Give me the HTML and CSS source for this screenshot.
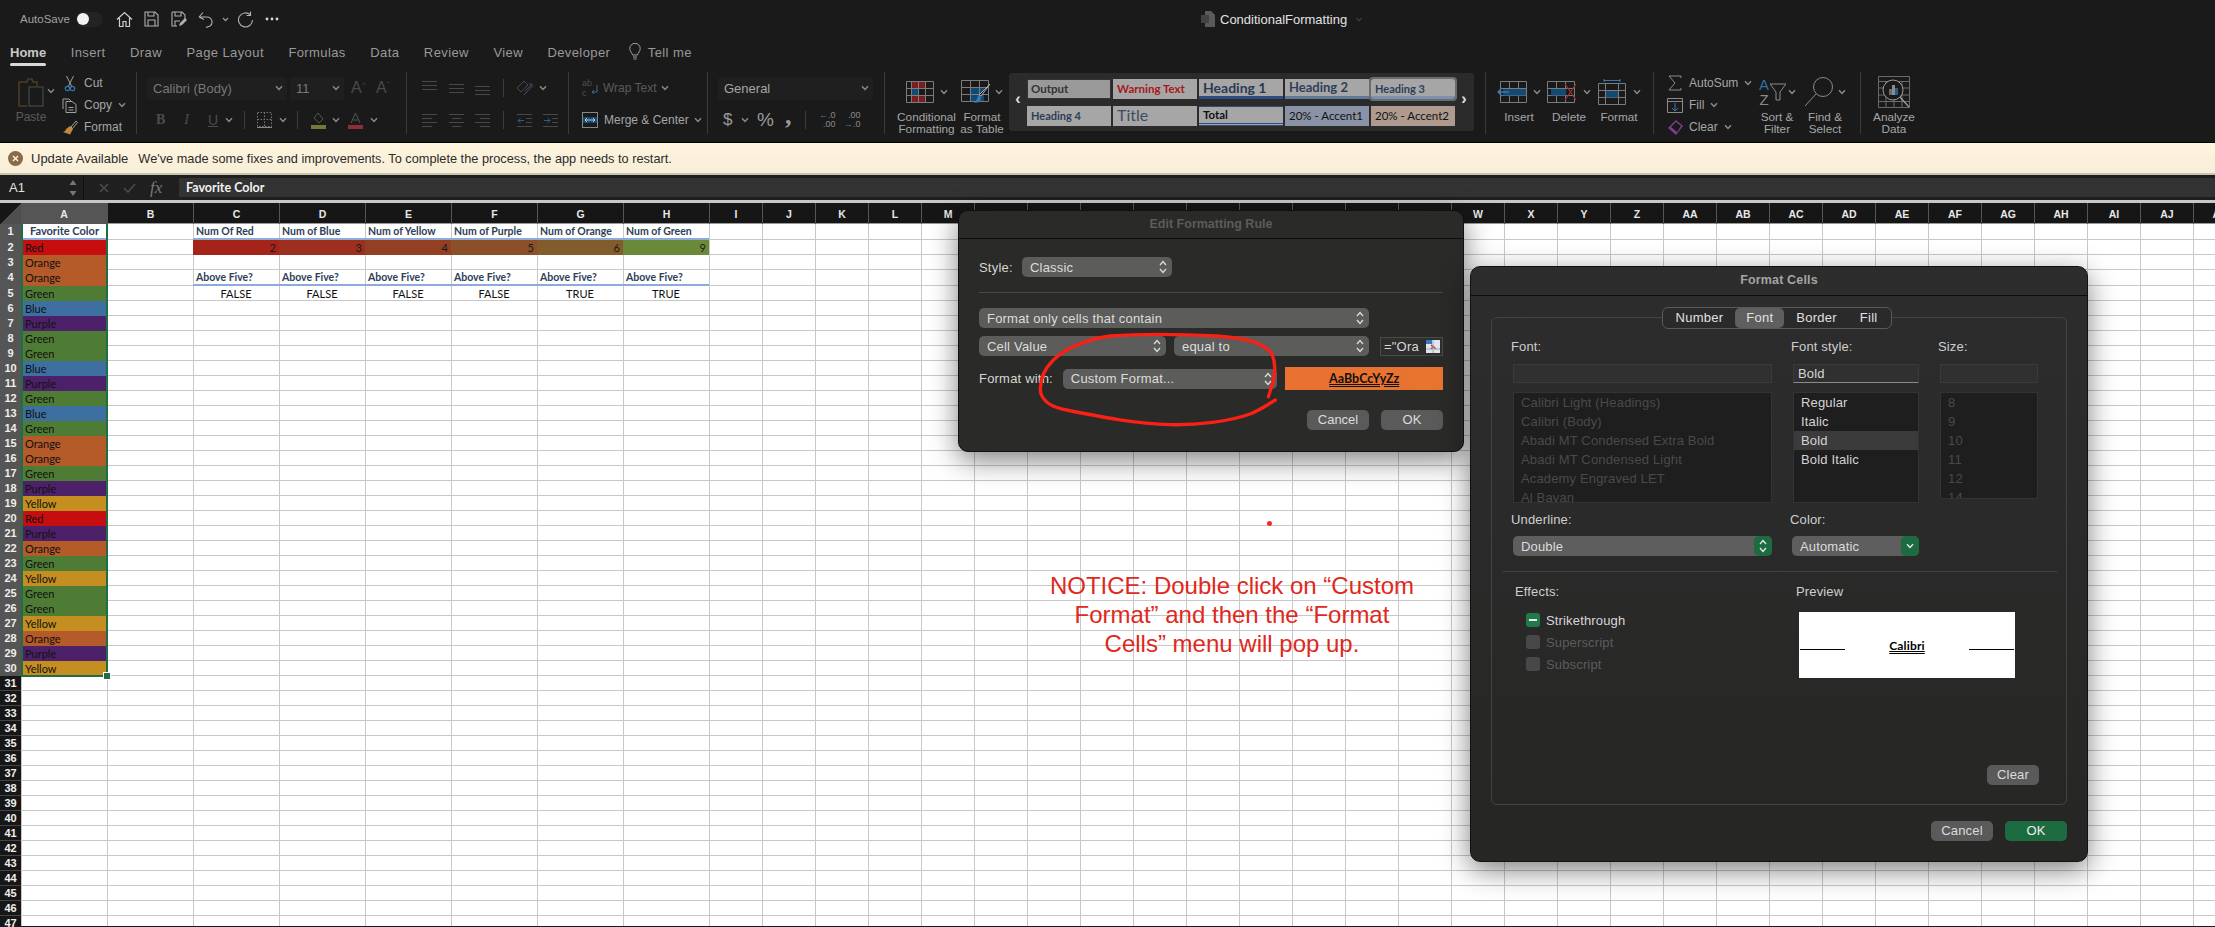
FILE: index.html
```html
<!DOCTYPE html>
<html lang="en">
<head>
  <meta charset="UTF-8">
  <title>ConditionalFormatting</title>
  <link rel="stylesheet" href="styles.css">
</head>
<body>
  <svg class="defs" width="0" height="0">
    <symbol id="chev" viewBox="0 0 8 6"><path d="M1 1.2 4 4.4 7 1.2" fill="none" stroke="currentColor" stroke-width="1.4"/></symbol>
    <symbol id="stepper" viewBox="0 0 8 14"><path d="M1 5 4 1.5 7 5M1 9 4 12.5 7 9" fill="none" stroke="currentColor" stroke-width="1.3"/></symbol>
  </svg>

  <!-- title bar -->
  <div class="titlebar">
    <span class="autosave">AutoSave</span>
    <span class="toggle"><span class="knob"></span></span>
    <svg class="qa m13" width="17" height="17" viewBox="0 0 17 17"><path d="M1 8.5 8.5 1.5 16 8.5M3.5 7v8.5h3.500v-5h3v5h3.500V7" fill="none" stroke="#cfcfcf" stroke-width="1.2"/></svg>
    <svg class="qa m11" width="15" height="16" viewBox="0 0 15 16"><path d="M1 1h10l3 3v11H1zM4 1v4h6V1M4 15v-6h7v6" fill="none" stroke="#b0b0b0" stroke-width="1.1"/></svg>
    <svg class="qa m12" width="16" height="16" viewBox="0 0 16 16"><path d="M1 1h10l3 3v5M6 15H1V1M4 1v4h6V1M4 15v-5h5" fill="none" stroke="#b0b0b0" stroke-width="1.1"/><path d="M8 15l1-3 5-5 2 2-5 5z" fill="#b0b0b0"/></svg>
    <svg class="qa m11" width="16" height="17" viewBox="0 0 16 17"><path d="M1 6 5 1.500M1 6l5 2.500M1.500 6H9a5 5 0 0 1 3 9l-4 1.500" fill="none" stroke="#b0b0b0" stroke-width="1.1"/></svg>
    <svg class="qchev m8" width="7" height="5"><use href="#chev"/></svg>
    <svg class="qa m8" width="17" height="17" viewBox="0 0 17 17"><path d="M13.500 4A7 7 0 1 0 15.500 9M13.500 0.500V4.500H9.500" fill="none" stroke="#b0b0b0" stroke-width="1.1"/></svg>
    <svg class="m11" width="14" height="4" viewBox="0 0 14 4"><circle cx="2" cy="2" r="1.400" fill="#d8d8d8"/><circle cx="7" cy="2" r="1.400" fill="#d8d8d8"/><circle cx="12" cy="2" r="1.400" fill="#d8d8d8"/></svg>
    <div class="docname">
      <svg width="14" height="16" viewBox="0 0 14 16"><path d="M4 0h6l4 4v12H4z" fill="#5a5a5a"/><rect x="0" y="4" width="8" height="8" fill="#444"/></svg>
      <span>ConditionalFormatting</span>
      <svg class="docchev" width="8" height="5"><use href="#chev"/></svg>
    </div>
  </div>

  <!-- tabs -->
  <div class="tabs">
    <span class="tab active">Home</span>
    <span class="tab">Insert</span>
    <span class="tab">Draw</span>
    <span class="tab">Page Layout</span>
    <span class="tab">Formulas</span>
    <span class="tab">Data</span>
    <span class="tab">Review</span>
    <span class="tab">View</span>
    <span class="tab">Developer</span>
    <span class="tab tell">
      <svg width="12" height="18" viewBox="0 0 12 18"><path d="M3.500 12C3 9.500.8 8.500.8 5.500a5.200 5.200 0 0 1 10.400 0c0 3-2.200 4-2.700 6.500zM4 14h4M4.500 16h3" fill="none" stroke="#a0a0a0" stroke-width="1"/></svg>
      Tell me
    </span>
  </div>

  <!-- ribbon -->
  <div class="ribbon">
    <div class="group g-clip">
      <div class="paste">
        <svg width="27" height="30" viewBox="0 0 27 30"><path d="M6 4h3l1-3h4l1 3h4v4M6 4H1v24h8" fill="none" stroke="#4d3c22" stroke-width="1.6"/><rect x="11" y="9" width="14" height="19" fill="none" stroke="#4e4e4e"/></svg>
        <span class="dim">Paste</span>
      </div>
      <svg class="chev paste-chev" width="8" height="6"><use href="#chev"/></svg>
      <div class="rows3">
        <div class="r"><svg width="16" height="17" viewBox="0 0 16 17"><path d="M4.500 1 9.500 11M11.500 1 6.500 11" stroke="#a0a0a0" fill="none"/><circle cx="5.500" cy="13.500" r="2.200" fill="none" stroke="#3578b5" stroke-width="1.200"/><circle cx="10.500" cy="13.500" r="2.200" fill="none" stroke="#3578b5" stroke-width="1.200"/></svg>Cut</div>
        <div class="r"><svg width="16" height="15" viewBox="0 0 16 15"><path d="M1 11V1h6l2 2M4 3.500h6l4 3V14.500H4zM6.500 9.500h5M6.500 12h5" fill="none" stroke="#a0a0a0"/></svg>Copy<svg class="chev m6" width="8" height="6"><use href="#chev"/></svg></div>
        <div class="r"><svg width="16" height="15" viewBox="0 0 16 15"><path d="M9 7l5-6 1.500 1.500-5 6z" fill="none" stroke="#a0a0a0"/><path d="M8 6l3 3-3 5.500-7-2.500 3-1.500-1-.5z" fill="#c08a3a"/></svg>Format</div>
      </div>
    </div>

    <div class="group g-font">
      <div class="row2">
        <div class="combo w140 dimmer">Calibri (Body)<svg class="chev" width="8" height="6"><use href="#chev"/></svg></div>
        <div class="combo w54 m3 dimmer">11<svg class="chev" width="8" height="6"><use href="#chev"/></svg></div>
        <span class="size-a m7">A<sup>^</sup></span>
        <span class="size-a m8">A<sup>ˇ</sup></span>
      </div>
      <div class="row2 font-btns dim">
        <b class="fb">B</b><i class="fb m17">I</i><u class="fb m17">U</u>
        <svg class="chev m8" width="8" height="6"><use href="#chev"/></svg><span class="sep m11"></span>
        <svg class="m12" width="15" height="16" viewBox="0 0 15 16"><path d="M.5.5h14v14H.5zM7.500.5v14M.5 7.500h14" fill="none" stroke="#777" stroke-dasharray="1.500 1.500"/><path d="M0 15.500h15" stroke="#888"/></svg>
        <svg class="chev m7" width="8" height="6"><use href="#chev"/></svg><span class="sep m10"></span>
        <svg class="m13" width="15" height="17" viewBox="0 0 15 17"><path d="M7 1l5 6-4 4-5-5z" fill="none" stroke="#555"/><rect y="13" width="15" height="4" fill="#77773c"/></svg>
        <svg class="chev m6" width="8" height="6"><use href="#chev"/></svg>
        <svg class="m8" width="15" height="17" viewBox="0 0 15 17"><path d="M3 11 7.500 1 12 11M5 8h5" fill="none" stroke="#555"/><rect y="13" width="15" height="4" fill="#8c2f37"/></svg>
        <svg class="chev m7" width="8" height="6"><use href="#chev"/></svg>
      </div>
    </div>

    <div class="group g-align">
      <div class="row2">
        <svg width="15" height="14" viewBox="0 0 15 14"><path d="M0 .5h15M0 4.500h15M0 8.500h15" stroke="#484848"/></svg>
        <svg class="m12" width="15" height="14" viewBox="0 0 15 14"><path d="M0 3.500h15M0 7.500h15M0 11.500h15" stroke="#484848"/></svg>
        <svg class="m11" width="15" height="14" viewBox="0 0 15 14"><path d="M0 5.500h15M0 9.500h15M0 13.500h15" stroke="#484848"/></svg>
        <span class="sep m13"></span>
        <svg class="m12" width="17" height="18" viewBox="0 0 17 18"><path d="M1 9 8 2l4 4-7 7zM9 12l7-7M13 5h3v3" fill="none" stroke="#484848"/><path d="M8 16l8-9" stroke="#2a5d8c"/></svg>
        <svg class="chev m6" width="8" height="6"><use href="#chev"/></svg>
      </div>
      <div class="row2">
        <svg width="15" height="14" viewBox="0 0 15 14"><path d="M0 1.500h15M0 5.500h10M0 9.500h15M0 13.500h10" stroke="#484848"/></svg>
        <svg class="m12" width="15" height="14" viewBox="0 0 15 14"><path d="M0 1.500h15M3 5.500h9M0 9.500h15M3 13.500h9" stroke="#484848"/></svg>
        <svg class="m11" width="15" height="14" viewBox="0 0 15 14"><path d="M0 1.500h15M5 5.500h10M0 9.500h15M5 13.500h10" stroke="#484848"/></svg>
        <span class="sep m13"></span>
        <svg class="m13" width="15" height="14" viewBox="0 0 15 14"><path d="M0 1.500h15M9 5.500h6M9 9.500h6M0 13.500h15" stroke="#484848"/><path d="M7 7.500H1M3.500 5 1 7.500 3.500 10" fill="none" stroke="#2a5d8c"/></svg>
        <svg class="m11" width="15" height="14" viewBox="0 0 15 14"><path d="M0 1.500h15M9 5.500h6M9 9.500h6M0 13.500h15" stroke="#484848"/><path d="M1 7.500h6M4.500 5 7 7.500 4.500 10" fill="none" stroke="#2a5d8c"/></svg>
      </div>
    </div>

    <div class="group g-wrap">
      <div class="row2">
        <span class="ab-stack">ab<br>c</span>
        <svg class="ab-arrow" width="7" height="11" viewBox="0 0 7 11"><path d="M6 0v7H1M3 5 1 7l2 2" fill="none" stroke="#3f6b8f"/></svg>
        <span class="m6 dim">Wrap Text</span><svg class="chev m4" width="8" height="6"><use href="#chev"/></svg>
      </div>
      <div class="row2">
        <svg width="16" height="16" viewBox="0 0 16 16"><rect x=".5" y=".5" width="15" height="15" fill="none" stroke="#888"/><rect x="1" y="5" width="14" height="6" fill="#134a73"/><path d="M3 8h10M5 6 3 8l2 2M11 6l2 2-2 2" fill="none" stroke="#bcd"/></svg>
        <span class="m6">Merge &amp; Center</span><svg class="chev m5" width="8" height="6"><use href="#chev"/></svg>
      </div>
    </div>

    <div class="group g-num">
      <div class="row2">
        <div class="combo w155">General<svg class="chev" width="8" height="6"><use href="#chev"/></svg></div>
      </div>
      <div class="row2 num-btns">
        <span class="dollar">$</span><svg class="chev m7" width="8" height="6"><use href="#chev"/></svg>
        <span class="pct m8">%</span><span class="comma m11">,</span>
        <span class="sep m14"></span>
        <span class="dec m11"><i>←</i>.0<br>.00</span><span class="dec m7">.00<br><i>→</i>.0</span>
      </div>
    </div>

    <div class="group g-styles">
      <div class="big w57">
        <div class="big-icon">
          <svg width="28" height="22" viewBox="0 0 28 22"><rect x="5" width="14" height="7" fill="#7a1f1f"/><rect x="5" y="7" width="7" height="8" fill="#134a73"/><rect x="5" y="15" width="14" height="7" fill="#7a1f1f"/><path d="M.5.5h27v21H.5zM.5 7.500h27M.5 14.500h27M5.500 0v22M12.500 0v22M19.500 0v22" fill="none" stroke="#7c7c7c"/></svg>
          <svg class="chev m6" width="8" height="6"><use href="#chev"/></svg>
        </div>
        <span>Conditional<br>Formatting</span>
      </div>
      <div class="big w44 m5">
        <div class="big-icon">
          <svg width="30" height="23" viewBox="0 0 30 23"><rect x="9" y="7" width="14" height="14" fill="#134a73"/><path d="M.5.500h27v21H.5zM.5 7.500h27M.5 14.500h27M9.500 0v22M18.500 0v22" fill="none" stroke="#7c7c7c"/><path d="M29 4 20 16l-2-1z" fill="#1a1a1a" stroke="#aaa"/><path d="M18 15l2 2-1 5-6 1c3-2 3-6 5-8z" fill="#3a78ad"/></svg>
          <svg class="chev m4" width="8" height="6"><use href="#chev"/></svg>
        </div>
        <span>Format<br>as Table</span>
      </div>
      <div class="gallery m5">
        <span class="gal-arrow">‹</span>
        <div class="gal-grid">
          <div class="st st-output">Output</div>
          <div class="st st-warn">Warning Text</div>
          <div class="st st-h1">Heading 1</div>
          <div class="st st-h2">Heading 2</div>
          <div class="st st-h3">Heading 3</div>
          <div class="st st-h4">Heading 4</div>
          <div class="st st-title">Title</div>
          <div class="st st-total">Total</div>
          <div class="st st-a1">20% - Accent1</div>
          <div class="st st-a2">20% - Accent2</div>
        </div>
        <span class="gal-arrow">›</span>
      </div>
    </div>

    <div class="group g-cells">
      <div class="big w50">
        <div class="big-icon">
          <svg width="30" height="22" viewBox="0 0 30 22"><path d="M3.500.500h26v21h-26zM3.500 7.500h26M3.500 14.500h26M12.500 0v22M21.500 0v22" fill="none" stroke="#7c7c7c"/><rect x="6" y="8" width="23" height="6.500" fill="#134a73"/><path d="M12 11H1M5 7l-4 4 4 4" fill="none" stroke="#3a78ad" stroke-width="1.300"/></svg>
          <svg class="chev m6" width="8" height="6"><use href="#chev"/></svg>
        </div>
        <span>Insert</span>
      </div>
      <div class="big w50">
        <div class="big-icon">
          <svg width="30" height="22" viewBox="0 0 30 22"><path d="M.5.500h27v21H.5zM.5 7.500h27M.5 14.500h27M9.500 0v22M18.500 0v22" fill="none" stroke="#7c7c7c"/><rect x="4" y="8" width="15" height="6.500" fill="#134a73"/><path d="M18 3 29 19M29 3 18 19" stroke="#9c2b2b" stroke-width="1.300"/></svg>
          <svg class="chev m6" width="8" height="6"><use href="#chev"/></svg>
        </div>
        <span>Delete</span>
      </div>
      <div class="big w50">
        <div class="big-icon">
          <svg width="29" height="26" viewBox="0 0 29 26"><path d="M6 1.500h16M6 0v3M22 0v3" stroke="#3a78ad" fill="none"/><path d="M.5 4.500h27v21H.5zM.5 11.500h27M.5 18.500h27M7.500 4v22M20.500 4v22" fill="none" stroke="#7c7c7c"/><rect x="8" y="12" width="12" height="6.500" fill="#134a73"/></svg>
          <svg class="chev m6" width="8" height="6"><use href="#chev"/></svg>
        </div>
        <span>Format</span>
      </div>
    </div>

    <div class="group g-edit">
      <div class="rows3 edit-rows">
        <div class="r"><svg width="16" height="16" viewBox="0 0 16 16"><path d="M14 3V1H2l6 7-6 7h12v-2" fill="none" stroke="#8a8a8a"/></svg>AutoSum<svg class="chev m6" width="8" height="6"><use href="#chev"/></svg></div>
        <div class="r"><svg width="16" height="15" viewBox="0 0 16 15"><path d="M.5.500h15v14H.5zM.5 3.500h15" fill="none" stroke="#8a8a8a"/><path d="M8 5v8M5 10l3 3 3-3" fill="none" stroke="#3a78ad"/></svg>Fill<svg class="chev m6" width="8" height="6"><use href="#chev"/></svg></div>
        <div class="r"><svg width="16" height="15" viewBox="0 0 16 15"><path d="M9 0l7 6-7 9-8-7z" fill="#7a3f8c"/><path d="M9 2l5 4-4 6-6-5z" fill="#1a1a1a"/></svg>Clear<svg class="chev m6" width="8" height="6"><use href="#chev"/></svg></div>
      </div>
      <div class="big w48">
        <div class="big-icon">
          <span class="az-stack"><span class="az-a">A</span><br>Z</span>
          <svg width="16" height="18" viewBox="0 0 16 18"><path d="M0 1h16l-6 8v8H6V9z" fill="none" stroke="#8a8a8a"/></svg>
          <svg class="chev m2" width="8" height="6"><use href="#chev"/></svg>
        </div>
        <span>Sort &amp;<br>Filter</span>
      </div>
      <div class="big w48">
        <div class="big-icon">
          <svg width="30" height="29" viewBox="0 0 30 29"><circle cx="19" cy="10" r="9.500" fill="none" stroke="#8a8a8a"/><path d="M12 17 1 29" stroke="#8a8a8a"/></svg>
          <svg class="chev m4" width="8" height="6"><use href="#chev"/></svg>
        </div>
        <span>Find &amp;<br>Select</span>
      </div>
    </div>

    <div class="group g-analyze">
      <div class="big w50">
        <div class="big-icon">
          <svg width="32" height="32" viewBox="0 0 32 32"><path d="M.5.500h31v31H.5zM.5 5.500h31M.5 12h31M.5 19h31M.5 25.500h31M8 5v26M16 5v26M24 5v26" fill="none" stroke="#6a6a6a"/><circle cx="15" cy="14" r="10" fill="#1a1a1a" stroke="#9a9a9a"/><rect x="11" y="13" width="3" height="6" fill="#6a6a6a"/><rect x="14" y="9" width="3" height="10" fill="#8a8a8a"/><rect x="17" y="12" width="3" height="7" fill="#1f5f92"/><path d="M22 21 31 31" stroke="#9a9a9a" stroke-width="1.300"/></svg>
        </div>
        <span>Analyze<br>Data</span>
      </div>
    </div>
  </div>

  <!-- update message -->
  <div class="update">
    <svg width="15" height="15" viewBox="0 0 15 15"><circle cx="7.500" cy="7.500" r="7.500" fill="#8b6b47"/><path d="M5 5l5 5M10 5l-5 5" stroke="#fdf3dc" stroke-width="1.500"/></svg>
    <strong>Update Available</strong>
    <span>We've made some fixes and improvements. To complete the process, the app needs to restart.</span>
  </div>

  <!-- formula bar -->
  <div class="formula">
    <div class="namebox">A1
      <svg width="8" height="18" viewBox="0 0 8 18"><path d="M4 1l3.500 5h-7zM4 17 .5 12h7z" fill="#777"/></svg>
    </div>
    <svg class="fa-x" width="10" height="10" viewBox="0 0 10 10"><path d="M1 1l8 8M9 1 1 9" stroke="#4c4c4c" stroke-width="1.500"/></svg>
    <svg class="fa-c" width="13" height="10" viewBox="0 0 13 10"><path d="M1 5l4 4 7-8" fill="none" stroke="#4c4c4c" stroke-width="1.500"/></svg>
    <span class="fx">fx</span>
    <div class="formula-input">Favorite Color</div>
  </div>
  <div class="topline"></div>

  <!-- sheet -->
  <div class="colheads">
    <div class="corner"></div>
    <div class="ch wide sel">A</div><div class="ch wide">B</div><div class="ch wide">C</div><div class="ch wide">D</div><div class="ch wide">E</div><div class="ch wide">F</div><div class="ch wide">G</div><div class="ch wide">H</div>
    <div class="ch">I</div><div class="ch">J</div><div class="ch">K</div><div class="ch">L</div><div class="ch">M</div><div class="ch">N</div><div class="ch">O</div><div class="ch">P</div><div class="ch">Q</div><div class="ch">R</div><div class="ch">S</div><div class="ch">T</div><div class="ch">U</div><div class="ch">V</div><div class="ch">W</div><div class="ch">X</div><div class="ch">Y</div><div class="ch">Z</div>
    <div class="ch">AA</div><div class="ch">AB</div><div class="ch">AC</div><div class="ch">AD</div><div class="ch">AE</div><div class="ch">AF</div><div class="ch">AG</div><div class="ch">AH</div><div class="ch">AI</div><div class="ch">AJ</div><div class="ch">AK</div>
  </div>

  <div class="sheet">
    <div class="rownums">
      <div class="rn sel tall">1</div><div class="rn sel">2</div><div class="rn sel">3</div><div class="rn sel tall">4</div><div class="rn sel">5</div><div class="rn sel">6</div><div class="rn sel">7</div><div class="rn sel">8</div><div class="rn sel">9</div><div class="rn sel">10</div>
      <div class="rn sel">11</div><div class="rn sel">12</div><div class="rn sel">13</div><div class="rn sel">14</div><div class="rn sel">15</div><div class="rn sel">16</div><div class="rn sel">17</div><div class="rn sel">18</div><div class="rn sel">19</div><div class="rn sel">20</div>
      <div class="rn sel">21</div><div class="rn sel">22</div><div class="rn sel">23</div><div class="rn sel">24</div><div class="rn sel">25</div><div class="rn sel">26</div><div class="rn sel">27</div><div class="rn sel">28</div><div class="rn sel">29</div><div class="rn sel">30</div>
      <div class="rn">31</div><div class="rn">32</div><div class="rn">33</div><div class="rn">34</div><div class="rn">35</div><div class="rn">36</div><div class="rn">37</div><div class="rn">38</div><div class="rn">39</div><div class="rn">40</div>
      <div class="rn">41</div><div class="rn">42</div><div class="rn">43</div><div class="rn">44</div><div class="rn">45</div><div class="rn">46</div><div class="rn">47</div>
    </div>

    <div class="cols-wide">
      <div class="col-a">
        <div class="ca head">Favorite Color</div>
        <div class="ca red">Red</div>
        <div class="ca orange">Orange</div>
        <div class="ca orange tall">Orange</div>
        <div class="ca green">Green</div>
        <div class="ca blue">Blue</div>
        <div class="ca purple">Purple</div>
        <div class="ca green">Green</div>
        <div class="ca green">Green</div>
        <div class="ca blue">Blue</div>
        <div class="ca purple">Purple</div>
        <div class="ca green">Green</div>
        <div class="ca blue">Blue</div>
        <div class="ca green">Green</div>
        <div class="ca orange">Orange</div>
        <div class="ca orange">Orange</div>
        <div class="ca green">Green</div>
        <div class="ca purple">Purple</div>
        <div class="ca yellow">Yellow</div>
        <div class="ca red">Red</div>
        <div class="ca purple">Purple</div>
        <div class="ca orange">Orange</div>
        <div class="ca green">Green</div>
        <div class="ca yellow">Yellow</div>
        <div class="ca green">Green</div>
        <div class="ca green">Green</div>
        <div class="ca yellow">Yellow</div>
        <div class="ca orange">Orange</div>
        <div class="ca purple">Purple</div>
        <div class="ca yellow last">Yellow</div>
        <span class="handle"></span>
      </div>
      <div class="col-b"></div>
      <div class="summary">
        <div class="sc hd">Num Of Red</div><div class="sc hd">Num of Blue</div><div class="sc hd">Num of Yellow</div><div class="sc hd">Num of Purple</div><div class="sc hd">Num of Orange</div><div class="sc hd">Num of Green</div>
        <div class="sc val v1">2</div><div class="sc val v2">3</div><div class="sc val v3">4</div><div class="sc val v4">5</div><div class="sc val v5">6</div><div class="sc val v6">9</div>
        <div class="sc"></div><div class="sc"></div><div class="sc"></div><div class="sc"></div><div class="sc"></div><div class="sc"></div>
        <div class="sc hd">Above Five?</div><div class="sc hd">Above Five?</div><div class="sc hd">Above Five?</div><div class="sc hd">Above Five?</div><div class="sc hd">Above Five?</div><div class="sc hd">Above Five?</div>
        <div class="sc bool">FALSE</div><div class="sc bool">FALSE</div><div class="sc bool">FALSE</div><div class="sc bool">FALSE</div><div class="sc bool">TRUE</div><div class="sc bool">TRUE</div>
      </div>
    </div>
    <div class="cols-narrow"></div>
  </div>

  <!-- Edit Formatting Rule -->
  <div class="dialog rule">
    <div class="dlg-title">Edit Formatting Rule</div>
    <div class="rule-body">
      <div class="rule-row">
        <span>Style:</span>
        <div class="select s-style">Classic<svg width="8" height="14"><use href="#stepper"/></svg></div>
      </div>
      <div class="rule-div"></div>
      <div class="rule-row">
        <div class="select s-type">Format only cells that contain<svg width="8" height="14"><use href="#stepper"/></svg></div>
      </div>
      <div class="rule-row r-cond">
        <div class="select s-value">Cell Value<svg width="8" height="14"><use href="#stepper"/></svg></div>
        <div class="select s-op">equal to<svg width="8" height="14"><use href="#stepper"/></svg></div>
        <div class="cond-input">="Ora
          <svg width="14" height="13" viewBox="0 0 14 13"><rect width="14" height="13" fill="#dfe6ee"/><rect width="6" height="4" fill="#3a78c8"/><path d="M5 5l5 4M5 9l3-3" stroke="#c62828" stroke-width="1.500"/><path d="M0 9h14M7 0v13" stroke="#9ab"/></svg>
        </div>
      </div>
      <div class="rule-row r-format">
        <span class="fw-label">Format with:</span>
        <div class="select s-format">Custom Format...<svg width="8" height="14"><use href="#stepper"/></svg></div>
        <div class="swatch">AaBbCcYyZz</div>
      </div>
      <div class="rule-btns">
        <span class="btn">Cancel</span>
        <span class="btn">OK</span>
      </div>
    </div>
  </div>

  <!-- hand drawn ring around Custom Format -->
  <svg class="ring" width="520" height="270" viewBox="0 0 1560 810">
    <path d="M955 590C968 550 985 510 966 462C940 425 880 414 800 408C690 402 560 402 480 408C410 418 345 445 310 480C280 510 268 545 272 578C282 610 310 622 350 630C450 650 560 672 660 674C740 676 840 664 900 642C935 628 955 612 976 600" fill="none" stroke="#fb2016" stroke-width="10" stroke-linecap="round"/>
  </svg>

  <span class="reddot"></span>
  <p class="notice">NOTICE: Double click on “Custom<br>Format” and then the “Format<br>Cells” menu will pop up.</p>

  <!-- Format Cells -->
  <div class="dialog cells">
    <div class="dlg-title light">Format Cells</div>
    <div class="tabbox">
      <div class="segment">
        <span class="seg">Number</span>
        <span class="seg on">Font</span>
        <span class="seg">Border</span>
        <span class="seg last">Fill</span>
      </div>
      <div class="font-grid">
        <div class="fcol c-font">
          <label class="fl">Font:</label>
          <div class="finput"></div>
          <ul class="flist off">
            <li>Calibri Light (Headings)</li><li>Calibri (Body)</li><li>Abadi MT Condensed Extra Bold</li><li>Abadi MT Condensed Light</li><li>Academy Engraved LET</li><li>Al Bayan</li>
          </ul>
        </div>
        <div class="fcol c-style">
          <label class="fl">Font style:</label>
          <div class="finput on">Bold</div>
          <ul class="flist">
            <li>Regular</li><li>Italic</li><li class="picked">Bold</li><li>Bold Italic</li>
          </ul>
        </div>
        <div class="fcol c-size">
          <label class="fl">Size:</label>
          <div class="finput"></div>
          <ul class="flist off short">
            <li>8</li><li>9</li><li>10</li><li>11</li><li>12</li><li>14</li>
          </ul>
        </div>
      </div>
      <div class="under-row">
        <div class="under-col u-line">
          <label class="fl">Underline:</label>
          <div class="select green-sel">Double<span class="gstep"><svg width="8" height="14"><use href="#stepper"/></svg></span></div>
        </div>
        <div class="under-col u-color">
          <label class="fl">Color:</label>
          <div class="select green-sel">Automatic<span class="gstep"><svg width="8" height="6"><use href="#chev"/></svg></span></div>
        </div>
      </div>
      <div class="tab-div"></div>
      <div class="effects">
        <div class="eff-col">
          <label class="fl">Effects:</label>
          <div class="check"><span class="box on"></span>Strikethrough</div>
          <div class="check off"><span class="box"></span>Superscript</div>
          <div class="check off"><span class="box"></span>Subscript</div>
        </div>
        <div class="prev-col">
          <label class="fl">Preview</label>
          <div class="preview">
            <span class="pv-line"></span>
            <span class="pv-text">Calibri</span>
            <span class="pv-line"></span>
          </div>
        </div>
      </div>
      <div class="clear-row"><span class="btn clear">Clear</span></div>
    </div>
    <div class="cells-btns">
      <span class="btn">Cancel</span>
      <span class="btn ok">OK</span>
    </div>
  </div>
</body>
</html>
```

FILE: styles.css
```css
* {
  box-sizing: border-box;
}

html, body {
  margin: 0;
  padding: 0;
}

body {
  position: relative;
  width: 2215px;
  height: 927px;
  overflow: hidden;
  background: #1a1a1a;
  font-family: "Liberation Sans", Arial, sans-serif;
  font-size: 12px;
  color: #a6a6a6;
}

svg {
  display: block;
  flex: none;
}

.defs {
  position: absolute;
}

/* spacing helpers for the icon rows */
.m2 { margin-left: 2px; }
.m3 { margin-left: 3px; }
.m4 { margin-left: 4px; }
.m5 { margin-left: 5px; }
.m6 { margin-left: 6px; }
.m7 { margin-left: 7px; }
.m8 { margin-left: 8px; }
.m10 { margin-left: 10px; }
.m11 { margin-left: 11px; }
.m12 { margin-left: 12px; }
.m13 { margin-left: 13px; }
.m14 { margin-left: 14px; }
.m17 { margin-left: 17px; }

.chev {
  color: #8c8c8c;
}

/* title bar */
.titlebar {
  display: flex;
  align-items: center;
  height: 38px;
  padding: 0 0 0 20px;
}

.autosave {
  width: 50px;
  font-size: 11.5px;
  color: #a0a0a0;
}

.toggle {
  display: block;
  width: 27px;
  height: 15px;
  margin-left: 6px;
  border-radius: 8px;
  background: #232323;
}

.knob {
  display: block;
  width: 12px;
  height: 12px;
  margin: 1px 0 0 1px;
  border-radius: 50%;
  background: #f2f2f2;
}

.qchev {
  color: #a0a0a0;
}

.docname {
  display: flex;
  align-items: center;
  gap: 5px;
  margin-left: 922px;
  font-size: 13px;
  color: #e2e2e2;
}

.docchev {
  margin-left: 3px;
  color: #3f3f3f;
}

/* tabs */
.tabs {
  display: flex;
  align-items: center;
  gap: 24.5px;
  height: 28px;
  padding-left: 10px;
}

.tab {
  position: relative;
  font-size: 13px;
  letter-spacing: .4px;
  color: #999;
}

.tab.active {
  font-weight: bold;
  letter-spacing: 0;
  color: #c8c8c8;
}

.tab.active::after {
  content: "";
  position: absolute;
  left: 0;
  right: 0;
  bottom: -6px;
  height: 3px;
  border-radius: 2px;
  background: #d8d8d8;
}

.tell {
  display: flex;
  align-items: center;
  gap: 7px;
  margin-left: -6px;
}

/* ribbon */
.ribbon {
  display: flex;
  height: 76px;
  padding-top: 6px;
}

.group {
  display: flex;
  height: 62px;
  border-right: 1px solid #3a3a3a;
}

.group:last-child {
  border-right: 0;
}

.g-clip { width: 137px; padding-left: 16px; }
.g-font { width: 270px; padding-left: 10px; flex-direction: column; }
.g-align { width: 162px; padding-left: 15px; flex-direction: column; }
.g-wrap { width: 139px; padding-left: 13px; flex-direction: column; }
.g-num { width: 177px; padding-left: 10px; flex-direction: column; }
.g-styles { width: 601px; padding-left: 13px; }
.g-cells { width: 168px; padding-left: 8px; }
.g-edit { width: 207px; padding-left: 13px; }
.g-analyze { width: 120px; padding-left: 8px; }

.paste {
  display: flex;
  flex-direction: column;
  align-items: center;
  width: 30px;
  padding-top: 6px;
}

.paste span {
  margin-top: 2px;
}

.paste-chev {
  margin: 16px 0 0 1px;
}

.dim {
  color: #5a5a5a;
}

.dimmer {
  color: #787878;
}

.rows3 {
  display: flex;
  flex-direction: column;
  margin-left: 7px;
}

.r {
  display: flex;
  flex: none;
  align-items: center;
  height: 22px;
}

.r > svg:first-child {
  margin-right: 6px;
}

.edit-rows {
  width: 86px;
  margin-left: 0;
}

.row2 {
  display: flex;
  flex: none;
  align-items: center;
  height: 32px;
}

.combo {
  display: flex;
  align-items: center;
  justify-content: space-between;
  height: 23px;
  padding: 0 4px 0 6px;
  border-radius: 3px;
  background: #1f1f1f;
  font-size: 13px;
}

.w140 { width: 140px; }
.w54 { width: 54px; }
.w155 { width: 155px; }

.size-a {
  width: 17px;
  font-size: 16px;
  color: #4a4a4a;
}

.size-a sup {
  font-size: 8px;
}

.fb {
  width: 9px;
  font-family: "Liberation Serif", serif;
  font-size: 14px;
  text-align: center;
  color: #4c4c4c;
}

u.fb {
  font-family: "Liberation Sans", sans-serif;
}

.font-btns {
  padding-left: 9px;
}

.sep {
  display: block;
  width: 1px;
  height: 18px;
  background: #3c3c3c;
}

.ab-stack {
  width: 10px;
  font-size: 9px;
  line-height: 10px;
  color: #4e4e4e;
}

.ab-arrow {
  margin-left: -1px;
  margin-top: 4px;
}

.g-wrap .ab-arrow + .m6 {
  margin-left: 5px;
}

.num-btns {
  padding-left: 5px;
}

.dollar {
  font-size: 17px;
  color: #9a9a9a;
  width: 11px;
}

.pct {
  font-size: 19px;
  color: #9a9a9a;
}

.comma {
  margin-top: -9px;
  font-family: "Liberation Serif", serif;
  font-size: 26px;
  font-weight: bold;
  line-height: 1;
  color: #9a9a9a;
}

.dec {
  width: 18px;
  font-size: 9px;
  line-height: 9px;
  text-align: right;
  color: #8a8a8a;
}

.dec i {
  font-style: normal;
  color: #2f7fbf;
}

/* large ribbon buttons */
.big {
  display: flex;
  flex-direction: column;
  align-items: center;
  flex: none;
  font-size: 11.75px;
  line-height: 12px;
  text-align: center;
  white-space: nowrap;
}

.big-icon {
  display: flex;
  flex: none;
  align-items: center;
  height: 39px;
}

.w44 { width: 44px; }
.w48 { width: 48px; }
.w50 { width: 50px; }
.w57 { width: 57px; }

.az-stack {
  width: 12px;
  font-size: 15px;
  line-height: 15px;
  color: #8a8a8a;
}

.az-a {
  color: #2f6ea5;
}

/* cell style gallery */
.gallery {
  display: flex;
  align-items: flex-start;
  flex: none;
  width: 465px;
  height: 58px;
  margin-top: 1px;
  border-radius: 3px;
  background: #2b2b2b;
}

.gal-arrow {
  width: 18px;
  margin-top: 18px;
  text-align: center;
  font-size: 16px;
  font-weight: bold;
  line-height: 16px;
  color: #e0e0e0;
}

.gal-grid {
  display: grid;
  grid-template-columns: repeat(5, 84px);
  grid-auto-rows: 20px;
  gap: 7px 2px;
  padding-top: 6px;
  width: 428px;
}

.st {
  padding-left: 4px;
  background: #a6a6a6;
  font-family: Lato, sans-serif;
  font-size: 11.5px;
  line-height: 19px;
  white-space: nowrap;
  color: #111;
}

.st-output { background: #9a9a9a; border: 1px solid #333; padding-left: 3px; line-height: 17px; font-weight: bold; color: #333; }
.st-warn { color: #a81818; font-weight: bold; }
.st-h1 { border-bottom: 3px solid #2f4b82; font-size: 14px; font-weight: bold; line-height: 17px; color: #2a3a55; }
.st-h2 { border-bottom: 3px solid #64789a; font-size: 13px; font-weight: bold; line-height: 17px; color: #2f3e58; }
.st-h3 { border-bottom: 3px solid #7c90b0; outline: 2px solid #6c6c6c; border-radius: 2px; font-size: 11px; font-weight: bold; color: #2f3e58; }
.st-h4 { font-size: 11px; font-weight: bold; color: #2f3e58; }
.st-title { font-size: 16px; line-height: 18px; color: #3f4c62; }
.st-total { border-top: 1px solid #2f4b82; border-bottom: 3px double #2f4b82; line-height: 16px; font-weight: bold; }
.st-a1 { background: #8a93a6; }
.st-a2 { background: #ae9a8e; }

/* update message */
.update {
  display: flex;
  align-items: center;
  height: 33px;
  padding-left: 8px;
  border-top: 1px solid #000;
  border-bottom: 2px solid #c9c3b2;
  background: linear-gradient(#fff4de, #f8efd9);
  font-size: 12.75px;
  color: #2b2b2b;
}

.update strong {
  margin: 0 10px 0 8px;
  font-size: 13px;
  font-weight: normal;
}

/* formula bar */
.formula {
  display: flex;
  align-items: center;
  height: 25px;
  background: #1f1f1f;
}

.namebox {
  display: flex;
  align-items: center;
  justify-content: space-between;
  width: 84px;
  height: 25px;
  padding: 0 6px 0 9px;
  border-right: 1px solid #111;
  font-size: 13px;
  color: #e0e0e0;
}

.fa-x { margin-left: 15px; }
.fa-c { margin-left: 14px; }

.fx {
  width: 29px;
  margin-left: 14px;
  font-family: "Liberation Serif", serif;
  font-size: 17px;
  font-style: italic;
  color: #7a7a7a;
}

.formula-input {
  flex: 1;
  height: 19px;
  padding-left: 7px;
  background: #333;
  font-family: Lato, sans-serif;
  font-size: 12.5px;
  font-weight: bold;
  line-height: 19px;
  color: #f2f2f2;
}

.topline {
  height: 3px;
  background: #c8c8c8;
}

/* sheet */
.colheads {
  display: flex;
  height: 21px;
  background: #161616;
}

.corner {
  flex: none;
  width: 21px;
  background: linear-gradient(135deg, #161616 50%, #4e4e4e 50%);
}

.ch {
  flex: none;
  width: 53px;
  border-left: 1px solid #555;
  font-size: 10.5px;
  font-weight: bold;
  line-height: 22px;
  text-align: center;
  color: #e8e8e8;
}

.ch.wide {
  width: 86px;
}

.ch.sel {
  background: #555;
  border-left: 0;
}

.sheet {
  display: flex;
  height: 703px;
  border-top: 1px solid #9a9a9a;
  margin-top: -1px;
  background: #fff;
}

.rownums {
  flex: none;
  width: 21px;
  background: #161616;
}

.rn {
  height: 15px;
  border-bottom: 1px solid #444;
  font-size: 11px;
  font-weight: bold;
  line-height: 14px;
  text-align: center;
  color: #eee;
}

.rn.tall {
  height: 16px;
}

.rn.sel {
  background: #555;
  border-bottom-color: #555;
}

.cols-wide {
  display: flex;
  align-items: flex-start;
  flex: none;
  width: 688px;
  height: 100%;
  background-image:
    linear-gradient(90deg, #c8c8c8 1px, transparent 1px),
    linear-gradient(#fff 15px, #c8c8c8 15px, #c8c8c8 16px, #fff 16px, #fff 30px, #c8c8c8 30px, #c8c8c8 31px, #fff 31px, #fff 45px, #c8c8c8 45px, #c8c8c8 46px, #fff 46px, #fff 61px, #c8c8c8 61px, #c8c8c8 62px, #fff 62px),
    linear-gradient(transparent 14px, #c8c8c8 14px);
  background-size: 86px 100%, 100% 62px, 100% 15px;
  background-repeat: repeat-x, no-repeat, repeat;
  background-position: 0 0, 0 0, 0 2px;
}

.cols-narrow {
  flex: 1;
  height: 100%;
  background-image:
    linear-gradient(90deg, #c8c8c8 1px, transparent 1px),
    linear-gradient(#fff 15px, #c8c8c8 15px, #c8c8c8 16px, #fff 16px, #fff 30px, #c8c8c8 30px, #c8c8c8 31px, #fff 31px, #fff 45px, #c8c8c8 45px, #c8c8c8 46px, #fff 46px, #fff 61px, #c8c8c8 61px, #c8c8c8 62px, #fff 62px),
    linear-gradient(transparent 14px, #c8c8c8 14px);
  background-size: 53px 100%, 100% 62px, 100% 15px;
  background-repeat: repeat-x, no-repeat, repeat;
  background-position: 0 0, 0 0, 0 2px;
}

.col-a {
  position: relative;
  flex: none;
  width: 87px;
  border: solid #1f6f46;
  border-width: 0 2px 2px;
  background: #fff;
  font-family: Lato, sans-serif;
  font-size: 11px;
}

.ca {
  height: 15px;
  padding-left: 2px;
  line-height: 15px;
  color: #111;
}

.ca.head {
  height: 16px;
  padding: 0;
  border-bottom: 2px solid #8ea9db;
  font-weight: bold;
  line-height: 14px;
  text-align: center;
  color: #2e4057;
}

.ca.tall { height: 16px; }
.ca.last { height: 14px; }
.red { background: #c60d10; }
.orange { background: #b55a29; }
.green { background: #4e7c35; }
.blue { background: #3e6fa1; }
.purple { background: #4d2169; }
.yellow { background: #c58e21; }

.handle {
  position: absolute;
  right: -4px;
  bottom: -4px;
  width: 6px;
  height: 6px;
  background: #1f6f46;
  outline: 1px solid #fff;
}

.col-b {
  flex: none;
  width: 85px;
}

.summary {
  display: grid;
  grid-template-columns: repeat(6, 86px);
  grid-template-rows: 16px 15px 15px 16px 15px;
  font-family: Lato, sans-serif;
  font-size: 11px;
}

.sc {
  padding: 0 3px;
  line-height: 15px;
  white-space: nowrap;
}

.sc.hd {
  border-bottom: 2px solid #8ea9db;
  font-size: 10.5px;
  font-weight: bold;
  line-height: 14px;
  color: #2e4057;
}

.sc.val {
  text-align: right;
  color: #1a1a1a;
}

.v1 { background: #a5241a; }
.v2 { background: #9c2f1d; }
.v3 { background: #923f24; }
.v4 { background: #8b4f29; }
.v5 { background: #835c2c; }
.v6 { background: #6a8a3a; }

.sc.bool {
  text-align: center;
  color: #111;
}

/* dialogs */
.dialog {
  position: absolute;
  border-radius: 10px;
  border: 1px solid #111;
  background: #2a2a28;
  box-shadow: 0 8px 28px rgba(0, 0, 0, .5);
  font-size: 13px;
  color: #d6d6d6;
}

.rule {
  left: 958px;
  top: 210px;
  width: 506px;
  height: 242px;
}

.dlg-title {
  height: 28px;
  border-bottom: 1px solid #0c0c0c;
  font-size: 12.5px;
  font-weight: bold;
  line-height: 26px;
  text-align: center;
  color: #5c5c5a;
}

.dlg-title.light {
  color: #a4a4a4;
}

.rule-body {
  padding: 18px 20px 0;
}

.rule-row {
  display: flex;
  align-items: center;
  letter-spacing: .2px;
}

.rule-row span {
  width: 43px;
}

.select {
  display: flex;
  align-items: center;
  justify-content: space-between;
  height: 20px;
  padding: 0 5px 0 8px;
  border-radius: 5px;
  background: #5c5c5a;
  color: #dcdcdc;
}

.s-style { width: 150px; }
.s-type { width: 390px; }
.s-value { width: 187px; }
.s-op { width: 195px; margin-left: 8px; }
.s-format { width: 215px; }

.rule-div {
  height: 1px;
  margin: 15px 0;
  background: #474745;
}

.r-cond {
  margin-top: 8px;
}

.cond-input {
  display: flex;
  align-items: center;
  justify-content: space-between;
  width: 63px;
  height: 19px;
  margin-left: 11px;
  padding: 0 2px 0 3px;
  border: 1px solid #4a4a48;
  background: #2e2e2c;
  font-size: 13px;
}

.r-format {
  margin-top: 11px;
}

.rule-row .fw-label {
  width: 84px;
}

.swatch {
  width: 158px;
  height: 23px;
  margin-left: 8px;
  background: linear-gradient(90deg, #e97132, #e8742f);
  font-family: Lato, sans-serif;
  font-size: 12.5px;
  font-weight: bold;
  line-height: 23px;
  text-align: center;
  text-decoration: underline double;
  letter-spacing: 0;
  color: #111;
}

.rule-btns {
  display: flex;
  justify-content: flex-end;
  gap: 12px;
  margin-top: 20px;
}

.btn {
  display: block;
  width: 62px;
  height: 20px;
  border-radius: 5px;
  background: #5a5a5a;
  line-height: 20px;
  text-align: center;
  color: #dcdcdc;
}

.ring {
  position: absolute;
  left: 950px;
  top: 200px;
}

.reddot {
  position: absolute;
  left: 1267px;
  top: 521px;
  width: 5px;
  height: 5px;
  border-radius: 50%;
  background: #f52a20;
}

.notice {
  position: absolute;
  left: 1032px;
  top: 571px;
  width: 400px;
  margin: 0;
  font-size: 24px;
  line-height: 29px;
  text-align: center;
  color: #e0281c;
}

/* Format Cells */
.cells {
  left: 1470px;
  top: 266px;
  width: 618px;
  height: 596px;
  background: linear-gradient(#2d2d2d, #262625);
  letter-spacing: .15px;
}

.cells .dlg-title {
  height: 29px;
  line-height: 27px;
}

.tabbox {
  display: flex;
  flex-direction: column;
  height: 488px;
  margin: 21px 20px 0;
  padding: 0 27px 0 21px;
  border: 1px solid #434343;
  border-radius: 6px;
}

.segment {
  display: flex;
  align-self: center;
  height: 22px;
  margin: -11px 0 0 2px;
  padding: 0 1px;
  border: 1px solid #5a5a5a;
  border-radius: 6px;
  background: #2a2a2a;
  letter-spacing: .25px;
}

.seg {
  padding: 0 12px;
  line-height: 20px;
  color: #e0e0e0;
}

.seg.on {
  padding: 0 11px;
  border-radius: 5px;
  background: #5f5f5f;
}

.seg.last {
  padding: 0 13px 0 11px;
}

.font-grid {
  display: flex;
  margin-top: 10px;
}

.fcol {
  flex: none;
}

.c-font { width: 259px; }
.c-style { width: 126px; margin-left: 21px; }
.c-size { width: 98px; margin-left: 21px; }

.fl {
  display: block;
  height: 16px;
  margin-left: -2px;
  line-height: 16px;
  color: #cfcfcf;
}

.finput {
  height: 19px;
  margin-top: 9px;
  padding-left: 4px;
  border: 1px solid #3a3a3a;
  background: #303030;
  line-height: 18px;
}

.finput.on {
  border-bottom-color: #8a8a8a;
}

.flist {
  height: 111px;
  margin: 9px 0 0;
  padding: 0;
  overflow: hidden;
  list-style: none;
  border: 1px solid #333;
  background: #1e1e1e;
}

.flist.short {
  height: 107px;
}

.flist li {
  height: 19px;
  padding-left: 7px;
  line-height: 19px;
  color: #d4d4d4;
  white-space: nowrap;
}

.flist.off li {
  color: #4a4a4a;
}

.flist li.picked {
  background: #3b3b3b;
}

.under-row {
  display: flex;
  margin-top: 9px;
}

.under-col .select {
  margin-top: 8px;
  padding-right: 0;
  background: #5e5e5e;
}

.u-line { width: 259px; }
.u-color { width: 127px; margin-left: 20px; }

.gstep {
  display: flex;
  align-items: center;
  justify-content: center;
  width: 18px;
  height: 20px;
  border-radius: 5px;
  background: #1d6b40;
  color: #e8e8e8;
}

.tab-div {
  height: 1px;
  margin: 15px -18px 0 -10px;
  background: #434343;
}

.effects {
  display: flex;
  margin-top: 12px;
}

.eff-col {
  width: 282px;
  padding-left: 4px;
}

.check {
  display: flex;
  align-items: center;
  height: 22px;
  padding-left: 9px;
  color: #d6d6d6;
}

.fl + .check {
  margin-top: 9px;
}

.check.off {
  color: #5c5c5c;
}

.box {
  display: block;
  position: relative;
  width: 14px;
  height: 14px;
  margin-right: 6px;
  border-radius: 3px;
  background: #484848;
}

.box.on {
  background: #217a4a;
}

.box.on::after {
  content: "";
  position: absolute;
  left: 3px;
  top: 6px;
  width: 8px;
  height: 2px;
  background: #eee;
}

.prev-col {
  width: 220px;
}

.prev-col .fl {
  margin-left: 1px;
}

.preview {
  display: flex;
  align-items: center;
  justify-content: space-between;
  width: 216px;
  height: 66px;
  margin: 12px 0 0 4px;
  padding: 0 1px;
  background: #fff;
}

.pv-line {
  width: 45px;
  height: 1px;
  margin-top: 9px;
  background: #000;
}

.pv-text {
  font-family: Lato, sans-serif;
  font-size: 12px;
  font-weight: bold;
  text-decoration: underline double;
  color: #000;
}

.clear-row {
  display: flex;
  justify-content: flex-end;
  margin: auto 0 19px;
}

.btn.clear {
  width: 52px;
}

.cells-btns {
  display: flex;
  justify-content: flex-end;
  gap: 12px;
  margin: 16px 20px 0 0;
}

.btn.ok {
  background: #1d6b40;
  color: #f0f0f0;
}
```
